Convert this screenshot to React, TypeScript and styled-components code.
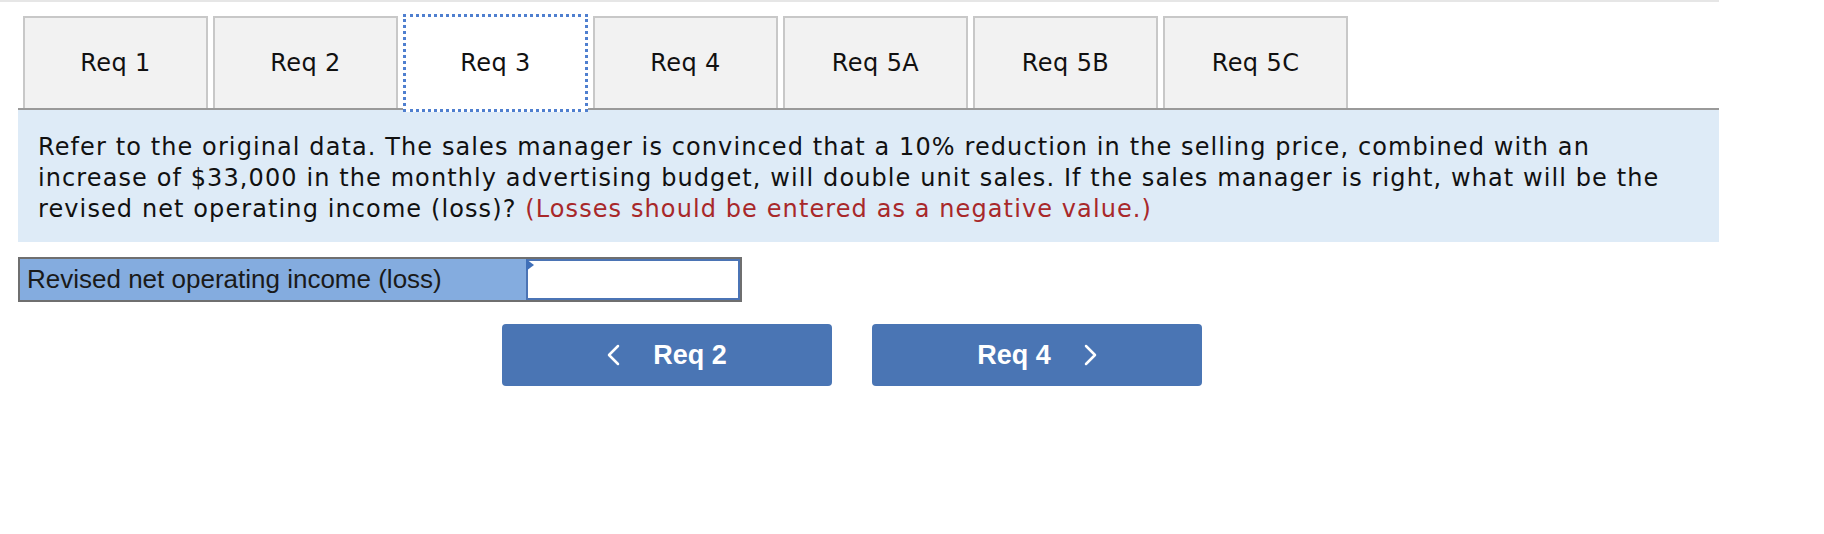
import styled, { createGlobalStyle } from "styled-components";

const GlobalStyle = createGlobalStyle`
  body {
    margin: 0;
    background: #fff;
  }
`;

const Page = styled.div`
  width: 1719px;
  box-sizing: border-box;
  border-top: 2px solid #e6e6e6;
  padding-left: 18px;
`;

const TabRow = styled.div`
  display: flex;
  align-items: flex-start;
  gap: 5px;
  padding-left: 5px;
  border-bottom: 2px solid #9a9a9a;
`;

const Tab = styled.div<{ $active?: boolean }>`
  box-sizing: border-box;
  width: 185px;
  height: ${(p) => (p.$active ? "98px" : "92px")};
  margin-top: ${(p) => (p.$active ? "12px" : "14px")};
  margin-bottom: ${(p) => (p.$active ? "-4px" : "0")};
  border: ${(p) => (p.$active ? "3px dotted #4f7fcf" : "2px solid #c8c8c8")};
  border-bottom: ${(p) => (p.$active ? "3px dotted #4f7fcf" : "0")};
  background: ${(p) => (p.$active ? "#fff" : "#f2f2f2")};
  display: flex;
  align-items: center;
  justify-content: center;
  font-family: "DejaVu Sans", Verdana, sans-serif;
  font-size: 24px;
  letter-spacing: 0.4px;
  color: #111;
`;

const Question = styled.div`
  background: #deebf7;
  padding: 22px 20px 17px;
  font-family: "DejaVu Sans", Verdana, sans-serif;
  font-size: 24px;
  letter-spacing: 1.1px;
  line-height: 31px;
  color: #111;
  white-space: nowrap;
`;

const Hint = styled.span`
  color: #a8282a;
`;

const AnswerRow = styled.div`
  margin-top: 15px;
  width: 724px;
  height: 45px;
  box-sizing: border-box;
  border: 2px solid #6f6f6f;
  display: flex;
`;

const Label = styled.div`
  width: 506px;
  background: #84acdf;
  display: flex;
  align-items: center;
  padding-left: 7px;
  box-sizing: border-box;
  font-family: "Liberation Sans", Arial, sans-serif;
  font-size: 26px;
  color: #1a1a1a;
`;

const Field = styled.div`
  flex: 1;
  position: relative;
  background: #fff;
  border: 2px solid #4b74b5;

  &::before {
    content: "";
    position: absolute;
    top: -2px;
    left: -2px;
    border-top: 6px solid transparent;
    border-bottom: 6px solid transparent;
    border-left: 8px solid #3f6fb8;
  }
`;

const NavRow = styled.div`
  display: flex;
  gap: 40px;
  margin-top: 22px;
  padding-left: 484px;
`;

const NavButton = styled.button`
  width: 330px;
  height: 62px;
  border: 0;
  border-radius: 4px;
  background: #4a75b4;
  color: #fff;
  display: flex;
  align-items: center;
  justify-content: center;
  gap: 33px;
  font-family: "Liberation Sans", Arial, sans-serif;
  font-weight: bold;
  font-size: 27px;
  cursor: pointer;
`;

const Chevron = ({ dir }: { dir: "left" | "right" }) => (
  <svg width="13" height="22" viewBox="0 0 13 22" fill="none">
    <path
      d={dir === "left" ? "M11 2 L2 11 L11 20" : "M2 2 L11 11 L2 20"}
      stroke="#fff"
      strokeWidth="2.5"
      strokeLinecap="round"
      strokeLinejoin="round"
    />
  </svg>
);

const tabs = ["Req 1", "Req 2", "Req 3", "Req 4", "Req 5A", "Req 5B", "Req 5C"];

export default function App() {
  return (
    <>
      <GlobalStyle />
      <Page>
        <TabRow>
          {tabs.map((t) => (
            <Tab key={t} $active={t === "Req 3"}>
              {t}
            </Tab>
          ))}
        </TabRow>
        <Question>
          Refer to the original data. The sales manager is convinced that a 10% reduction in the selling price, combined with an
          <br />
          increase of $33,000 in the monthly advertising budget, will double unit sales. If the sales manager is right, what will be the
          <br />
          revised net operating income (loss)? <Hint>(Losses should be entered as a negative value.)</Hint>
        </Question>
        <AnswerRow>
          <Label>Revised net operating income (loss)</Label>
          <Field />
        </AnswerRow>
        <NavRow>
          <NavButton>
            <Chevron dir="left" />
            Req 2
          </NavButton>
          <NavButton>
            Req 4
            <Chevron dir="right" />
          </NavButton>
        </NavRow>
      </Page>
    </>
  );
}
